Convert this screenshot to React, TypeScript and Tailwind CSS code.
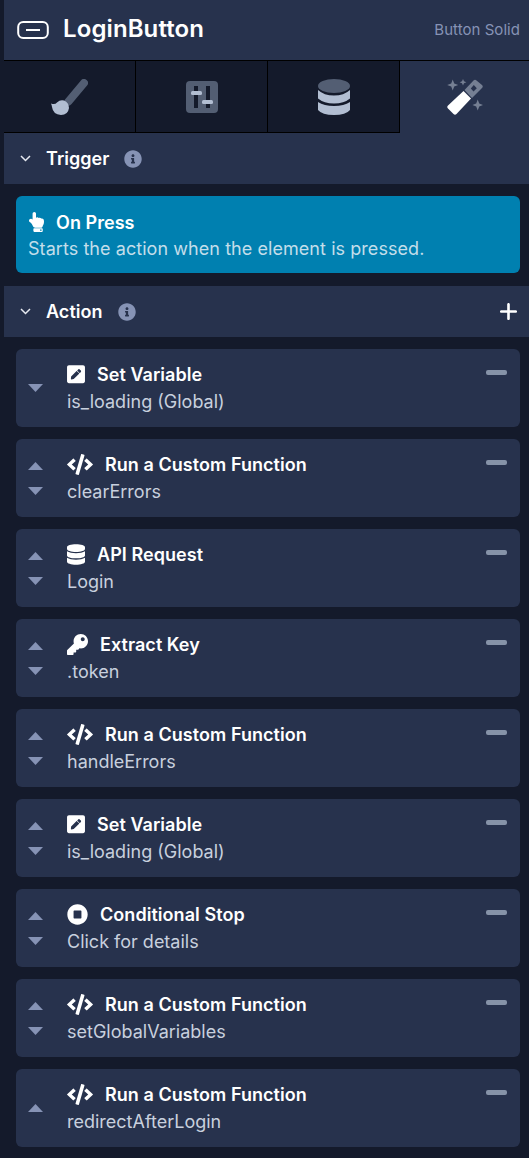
import React from "react";
import { FaPlus } from "react-icons/fa6";
import { FaCode, FaDatabase, FaKey, FaStopCircle, FaPenSquare, FaInfoCircle, FaHandPointUp } from "react-icons/fa";

type Step = { icon: "pen" | "code" | "db" | "key" | "stop"; title: string; sub: string; up: boolean; down: boolean };
const steps: Step[] = [
  { icon: "pen", title: "Set Variable", sub: "is_loading (Global)", up: false, down: true },
  { icon: "code", title: "Run a Custom Function", sub: "clearErrors", up: true, down: true },
  { icon: "db", title: "API Request", sub: "Login", up: true, down: true },
  { icon: "key", title: "Extract Key", sub: ".token", up: true, down: true },
  { icon: "code", title: "Run a Custom Function", sub: "handleErrors", up: true, down: true },
  { icon: "pen", title: "Set Variable", sub: "is_loading (Global)", up: true, down: true },
  { icon: "stop", title: "Conditional Stop", sub: "Click for details", up: true, down: true },
  { icon: "code", title: "Run a Custom Function", sub: "setGlobalVariables", up: true, down: true },
  { icon: "code", title: "Run a Custom Function", sub: "redirectAfterLogin", up: true, down: false },
];

function StepIcon({ icon }: { icon: Step["icon"] }) {
  if (icon === "pen") return <FaPenSquare className="w-[18px] h-[20.5px] mr-[12px]" />;
  if (icon === "code") return <FaCode className="w-[26px] h-[21px] mr-[12px]" />;
  if (icon === "db") return <FaDatabase className="w-[18px] h-[21px] mr-[12px]" />;
  if (icon === "key") return <FaKey className="w-[21px] h-[21px] mr-[12px]" />;
  return <FaStopCircle className="w-[21px] h-[21px] mr-[12px]" />;
}

function Tri({ down }: { down?: boolean }) {
  return (
    <svg width="15" height="8" viewBox="0 0 15 8" className="block">
      <path d={down ? "M0 0H15L7.5 8Z" : "M0 8H15L7.5 0Z"} fill="#8693b5" />
    </svg>
  );
}

function Section({ title, plus }: { title: string; plus?: boolean }) {
  return (
    <div className="h-[51px] bg-[#27324d] flex items-center pl-[16px] pr-[10px] text-white">
      <svg width="11" height="7" viewBox="0 0 11 7" fill="none">
        <path d="M1 1L5.5 5.5L10 1" stroke="#e6e9f0" strokeWidth="1.5" />
      </svg>
      <span className="ml-[15px] text-[18px] font-semibold tracking-[0.04px]">{title}</span>
      <FaInfoCircle className="ml-[15px] w-[18px] h-[18px] text-[#8693b5]" />
      {plus && <FaPlus className="ml-auto w-[21px] h-[21px]" />}
    </div>
  );
}

function Card({ s }: { s: Step }) {
  return (
    <div className="h-[78px] rounded-[6px] bg-[#27324d] flex relative">
      <div className="w-[39px] flex flex-col items-center justify-center gap-[17px]">
        {s.up && <Tri />}
        {s.down && <Tri down />}
      </div>
      <div className="pl-[12px] pt-[13px]">
        <div className="flex items-center h-[24px] text-white">
          <StepIcon icon={s.icon} />
          <span className="text-[18px] font-semibold tracking-[0.05px]">{s.title}</span>
        </div>
        <div className="text-[18px] leading-[24px] mt-[4px] text-[#c8d0de]">{s.sub}</div>
      </div>
      <div className="absolute right-[13px] top-[21px] w-[21px] h-[5px] rounded-[2px] bg-[#8693a8]" />
    </div>
  );
}

export default function App() {
  return (
    <div className="w-[529px] h-[1158px] overflow-hidden bg-[#141a2b] pl-[4px] font-['Inter',sans-serif]">
      <div className="h-[60px] bg-[#27324d] flex items-center pl-[13px] pr-[9px]">
        <svg width="32" height="20" viewBox="0 0 32 20" fill="none">
          <rect x="1.2" y="2" width="29.6" height="16" rx="5" stroke="#fff" strokeWidth="2" />
          <rect x="9" y="9" width="14" height="2" fill="#fff" />
        </svg>
        <span className="ml-[14px] text-[24px] leading-[32px] font-semibold text-white tracking-[0.1px] mb-[2px]">LoginButton</span>
        <span className="ml-auto text-[15px] text-[#8693b5] tracking-[0.05px]">Button Solid</span>
      </div>
      <div className="h-[73px] flex border-t border-black bg-[#27324d]">
        <div className="w-[132px] bg-[#141a2b] border-b border-r border-black flex items-center justify-center">
          <svg width="37" height="36" viewBox="0 0 37 36">
            <path d="M33 4 L17.5 22.500" stroke="#535e73" strokeWidth="8" strokeLinecap="round" fill="none" />
            <path d="M0 24.500 Q4 26 6 23.500 Q9 20.500 13 21.500 Q18 23.500 18 29 Q17 36 10 36 Q2 35.500 1 28 Q0.800 26 0 24.500Z" fill="#b2bed2" />
          </svg>
        </div>
        <div className="w-[132px] bg-[#141a2b] border-b border-r border-black flex items-center justify-center">
          <svg width="32" height="32" viewBox="0 0 32 32">
            <rect width="32" height="32" rx="4" fill="#535e73" />
            <rect x="8" y="5" width="4" height="22" fill="#141a2b" />
            <rect x="20" y="5" width="4" height="22" fill="#141a2b" />
            <rect x="5" y="10" width="11" height="4" rx="1.5" fill="#b2bed2" />
            <rect x="16" y="19" width="11" height="4" rx="1.5" fill="#b2bed2" />
          </svg>
        </div>
        <div className="w-[132px] bg-[#141a2b] border-b border-r border-black flex items-center justify-center">
          <svg width="32" height="36" viewBox="0 0 32 36">
            <ellipse cx="16" cy="7" rx="16" ry="7" fill="#535e73" />
            <path d="M0 11 Q6 16.500 16 16.500 Q26 16.500 32 11 V19.500 Q26 24.500 16 24.500 Q6 24.500 0 19.500 Z" fill="#b2bed2" />
            <path d="M0 23 Q6 27 16 27 Q26 27 32 23 V31 Q28 36 16 36 Q4 36 0 31 Z" fill="#b2bed2" />
          </svg>
        </div>
        <div className="flex-1 flex items-center justify-center">
          <svg width="36" height="37" viewBox="0 0 36 37">
            <path d="M5.700 0.500 L7.200 4.500 L11.200 6 L7.200 7.500 L5.700 11.500 L4.200 7.500 L0.200 6 L4.200 4.500Z" fill="#757f93" />
            <path d="M16 0 L17 2.300 L19.400 3.300 L17 4.300 L16 6.600 L15 4.300 L12.600 3.300 L15 2.300Z" fill="#757f93" />
            <path d="M30.700 20.500 L32.200 24.500 L36 26 L32.200 27.500 L30.700 31.500 L29.200 27.500 L25.400 26 L29.200 24.500Z" fill="#757f93" />
            <path d="M26.500 1.500 Q28 0 29.500 1.500 L35 6 Q36.500 7.500 35 9 L25 19 L17.500 11 Z M26.800 6 L23.800 9.500 L26.500 12.500 L29.800 9.200Z" fill="#757f93" fillRule="evenodd" />
            <path d="M16.500 12 L24 19.500 L9.500 35 Q8 36.500 6.500 35 L1 29.500 Q-0.500 28 1 26.500Z" fill="#fff" />
          </svg>
        </div>
      </div>
      <Section title="Trigger" />
      <div className="pl-[12px] pr-[9px] pt-[12px] pb-[13px]">
        <div className="h-[77px] rounded-[6px] bg-[#0080b0] px-[12px] pt-[14px]">
          <div className="flex items-center h-[24px] text-white">
            <FaHandPointUp className="w-[17px] h-[20px]" />
            <span className="ml-[11px] text-[18px] font-semibold tracking-[0.05px]">On Press</span>
          </div>
          <div className="text-[18px] leading-[24px] mt-[3px] tracking-[0.06px] text-[#c3deea]">Starts the action when the element is pressed.</div>
        </div>
      </div>
      <Section title="Action" plus />
      <div className="pl-[12px] pr-[9px] pt-[12px] flex flex-col gap-[12px]">
        {steps.map((s, i) => <Card key={i} s={s} />)}
      </div>
    </div>
  );
}
